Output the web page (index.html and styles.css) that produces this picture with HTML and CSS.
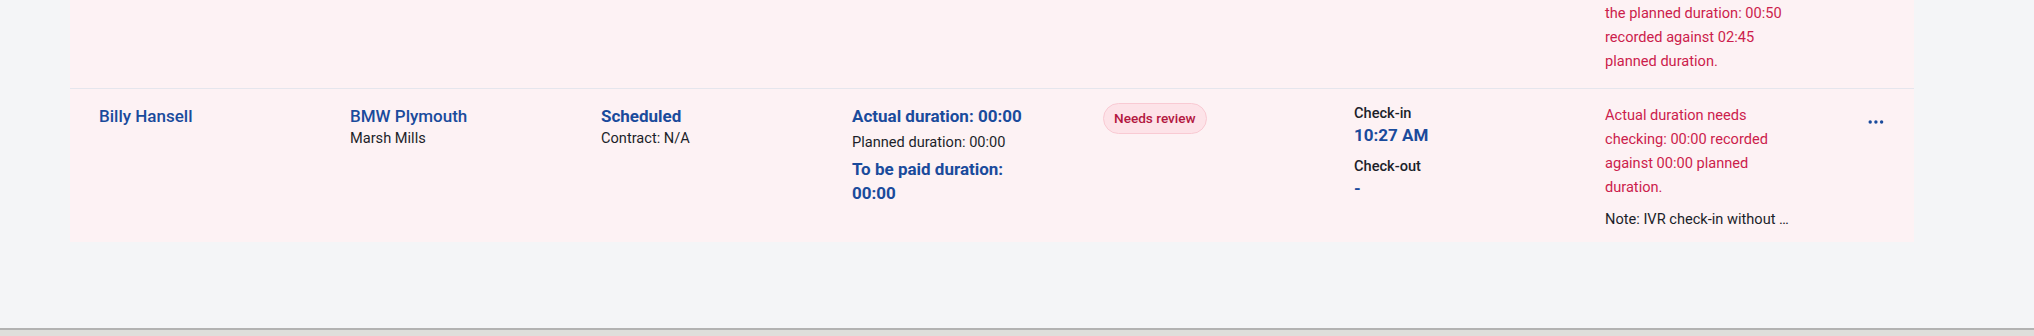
FILE: index.html
```html
<!doctype html>
<html lang="en">
  <head>
    <meta charset="UTF-8" />
    <meta name="viewport" content="width=device-width, initial-scale=1.0" />
    <title>Visit review</title>
    <link rel="stylesheet" href="styles.css">
  </head>
  <body>
    <div class="page">
      <div class="visits">
        <!-- previous row, scrolled mostly out of view -->
        <div class="visit visit-clipped">
          <div class="cell"></div>
          <div class="cell"></div>
          <div class="cell"></div>
          <div class="cell"></div>
          <div class="cell"></div>
          <div class="cell"></div>
          <div class="cell issues">
            <p class="issue-text">the planned duration: 00:50 recorded against 02:45 planned duration.</p>
          </div>
          <div class="cell"></div>
        </div>

        <div class="visit">
          <div class="cell">
            <div class="title">Billy Hansell</div>
          </div>

          <div class="cell">
            <div class="title">BMW Plymouth</div>
            <div class="subtitle">Marsh Mills</div>
          </div>

          <div class="cell">
            <div class="title bold">Scheduled</div>
            <div class="subtitle">Contract: N/A</div>
          </div>

          <div class="cell">
            <div class="title bold">Actual duration: 00:00</div>
            <div class="planned">Planned duration: 00:00</div>
            <div class="title bold">To be paid duration: 00:00</div>
          </div>

          <div class="cell">
            <span class="badge">Needs review</span>
          </div>

          <div class="cell">
            <div class="check-label">Check-in</div>
            <div class="check-time">10:27 AM</div>
            <div class="check-label gap">Check-out</div>
            <div class="check-time">-</div>
          </div>

          <div class="cell issues">
            <p class="issue-text">Actual duration needs checking: 00:00 recorded against 00:00 planned duration.</p>
            <p class="note">Note: IVR check-in without check-out</p>
          </div>

          <div class="cell">
            <button class="more" aria-label="More actions">
              <svg width="16" height="4" viewBox="0 0 16 4">
                <circle cx="2.2" cy="2" r="1.7" />
                <circle cx="7.9" cy="2" r="1.7" />
                <circle cx="13.6" cy="2" r="1.7" />
              </svg>
            </button>
          </div>
        </div>
      </div>
    </div>
    <div class="statusbar"></div>
  </body>
</html>
```

FILE: styles.css
```css
body {
  margin: 0;
  font-family: Roboto, "Noto Sans", sans-serif;
  background: #f4f5f7;
  color: #1c1f2a;
}

.page {
  height: 328px;
  padding-left: 70px;
  overflow: hidden;
}

.visits {
  width: 1844px;
  background: #fdf2f4;
}

.visit {
  display: grid;
  grid-template-columns: repeat(7, 190px) 40px;
  column-gap: 61px;
  padding: 14px 0 11px 29px;
}

.visit-clipped {
  height: 89px;
  box-sizing: border-box;
  padding-top: 0;
  padding-bottom: 15px;
  border-bottom: 1px solid #e5e6ed;
  align-items: end;
  overflow: hidden;
}

.cell {
  min-width: 0;
}

.title {
  font-size: 17px;
  line-height: 24px;
  font-weight: 500;
  color: #1a4b9c;
}

.cell > .title:first-child {
  margin-top: 1px;
}

.title.bold {
  font-weight: 700;
}

.subtitle {
  font-size: 14.6px;
  line-height: 20px;
}

.planned {
  font-size: 14.6px;
  line-height: 20px;
  margin: 4px 0 5px;
}

.badge {
  display: inline-block;
  padding: 7px 10px;
  font-size: 13.6px;
  line-height: 15px;
  font-weight: 500;
  color: #b3173f;
  background: #fde3e8;
  border: 1px solid #f9cad3;
  border-radius: 16px;
}

.check-label {
  font-size: 14.6px;
  line-height: 20px;
  font-weight: 500;
  color: #1c1f2a;
}

.check-label.gap {
  margin-top: 9px;
}

.check-time {
  font-size: 17px;
  line-height: 24px;
  font-weight: 700;
  color: #1a4b9c;
}

.issue-text {
  margin: 0;
  font-size: 14.6px;
  line-height: 24px;
  color: #cc1d4c;
}

.note {
  margin: 8px 0 0;
  font-size: 14.6px;
  line-height: 24px;
  white-space: nowrap;
  overflow: hidden;
  text-overflow: ellipsis;
}

.more {
  display: flex;
  align-items: center;
  justify-content: center;
  width: 40px;
  height: 24px;
  margin-top: 7px;
  padding: 0;
  border: none;
  background: transparent;
  cursor: pointer;
}

.more svg {
  fill: #1a4b9c;
}

.statusbar {
  height: 6px;
  border-top: 2px solid #b2b2b2;
  background: #dfdedb;
}
```
